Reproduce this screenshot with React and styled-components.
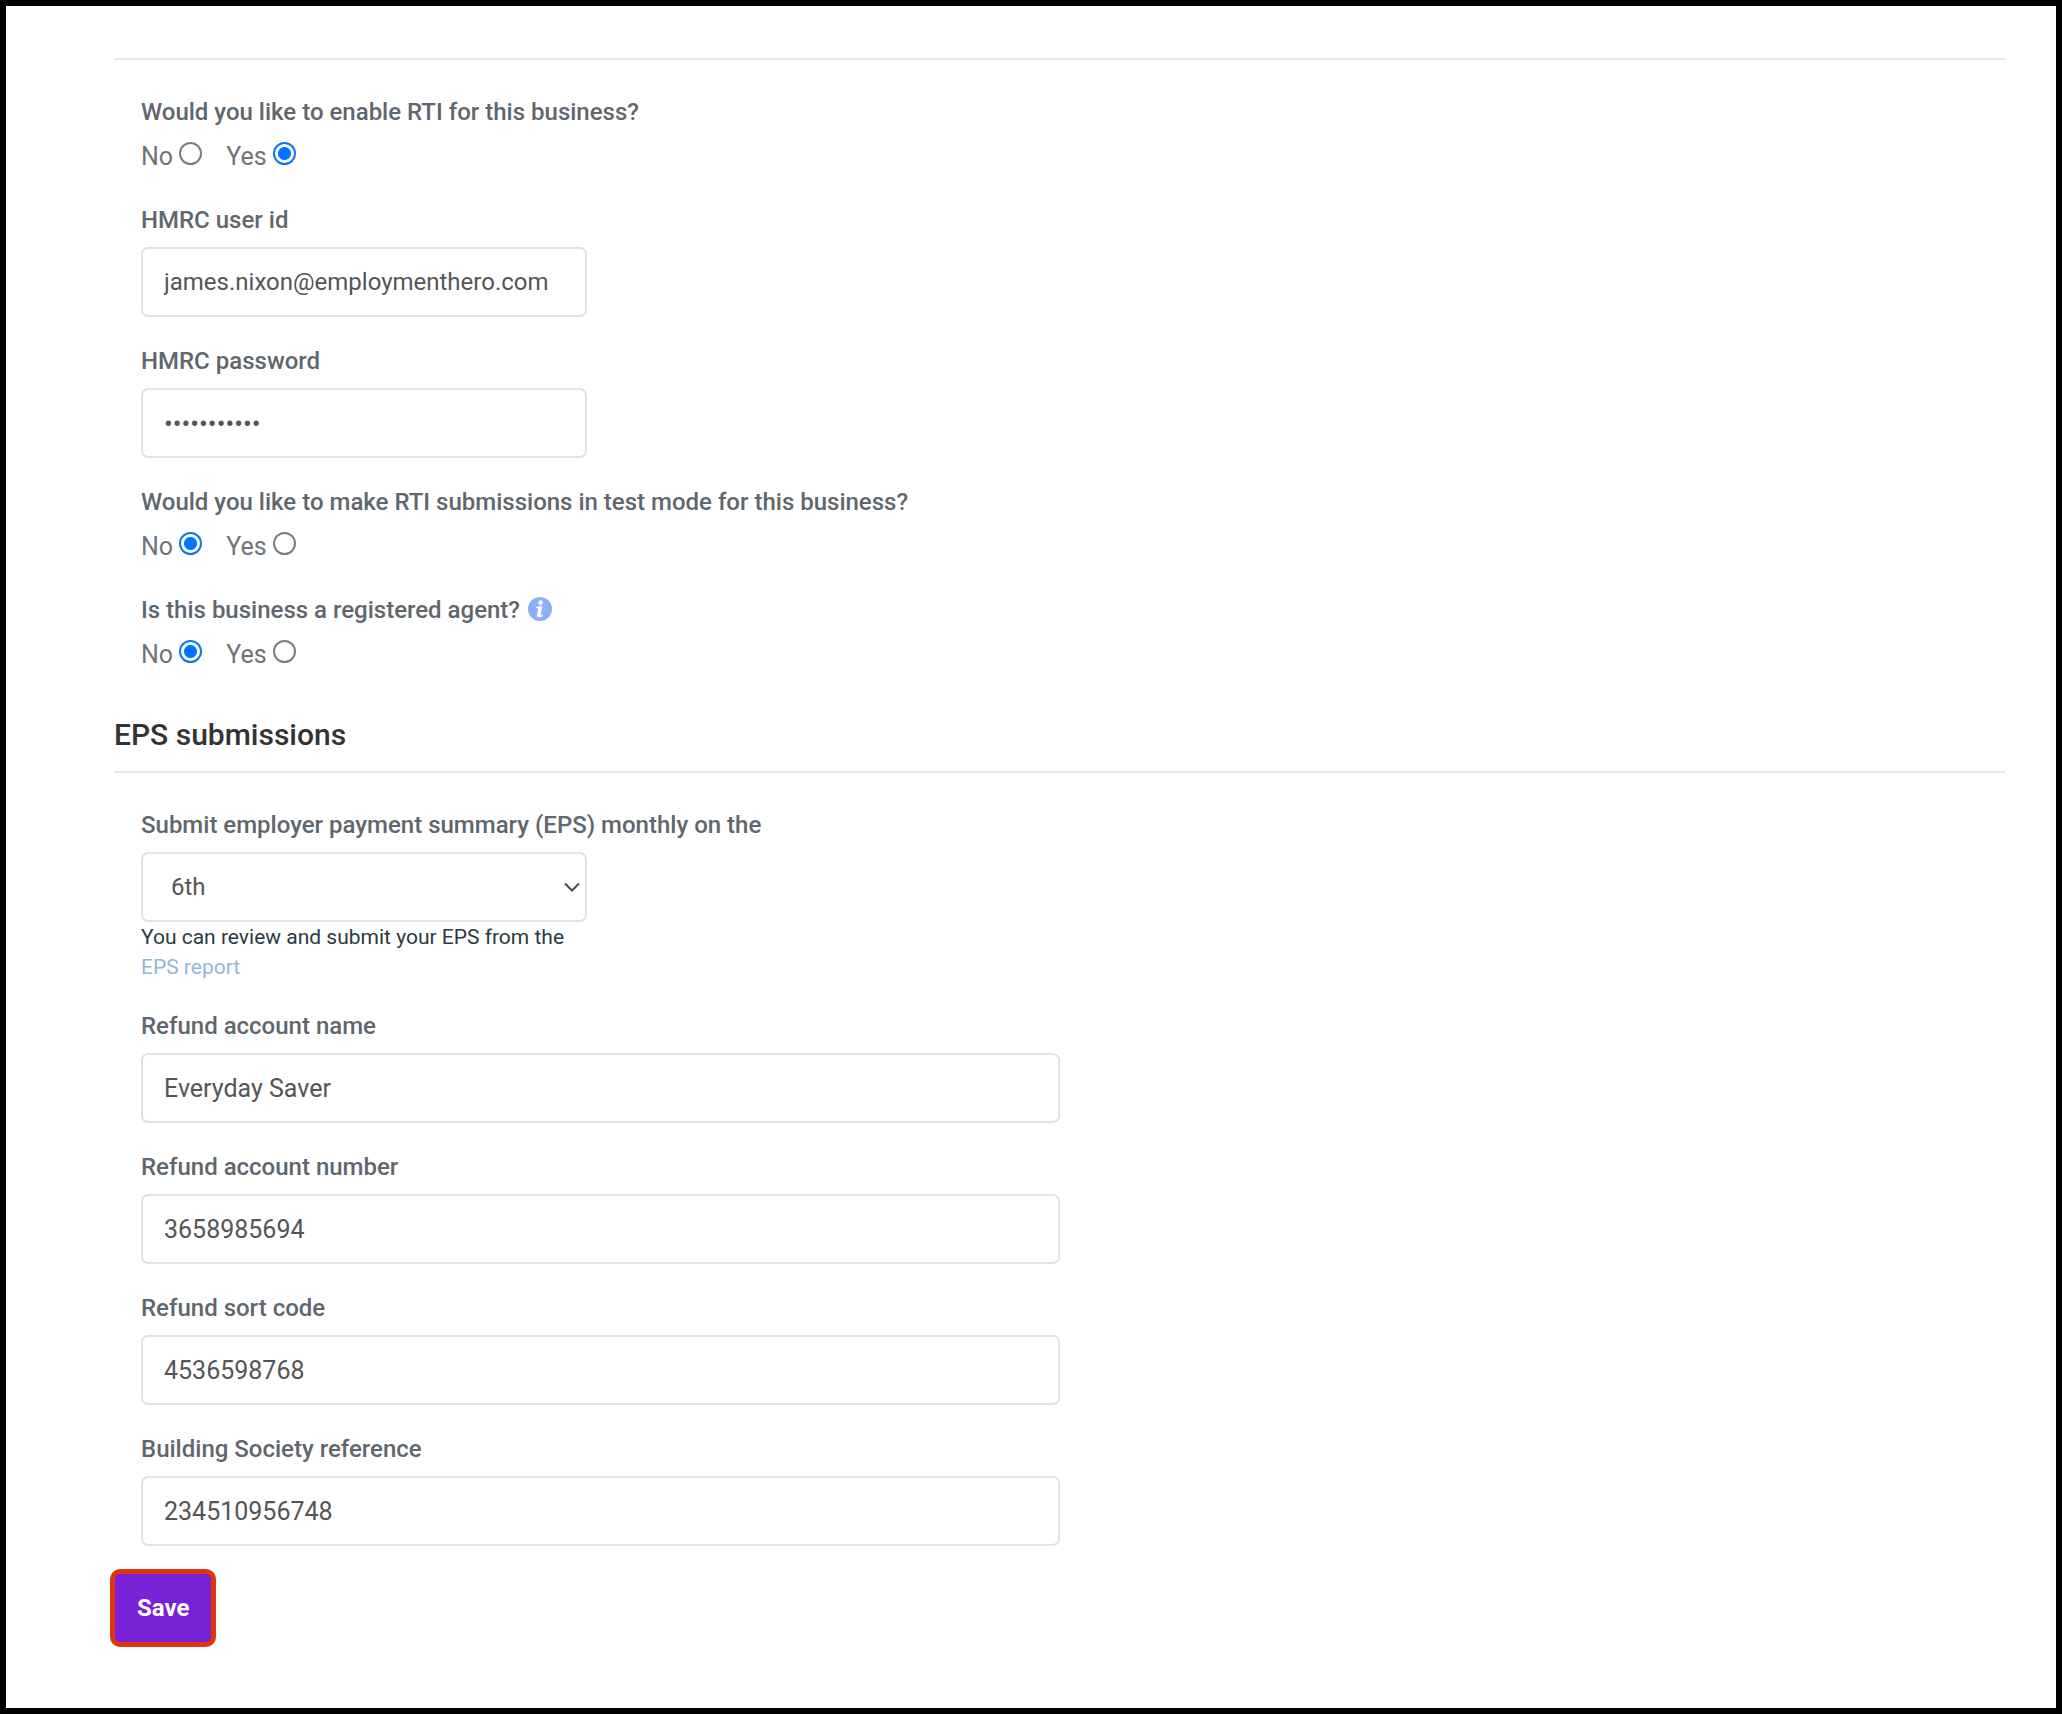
import React, { useState } from "react";
import styled, { createGlobalStyle } from "styled-components";

const days = ["1st", "2nd", "3rd", "4th", "5th", "6th", "7th", "8th"];

const YesNo = ({ name, legend, info, initial }) => {
  const [value, setValue] = useState(initial);

  return (
    <Group>
      <Legend>
        {legend}
        {info && <InfoIcon />}
      </Legend>
      <Options>
        {["No", "Yes"].map((option) => (
          <Option key={option}>
            {option}{" "}
            <Radio
              name={name}
              value={option}
              checked={value === option}
              onChange={() => setValue(option)}
            />
          </Option>
        ))}
      </Options>
    </Group>
  );
};

const TextField = ({ id, label, type = "text", value, wide }) => (
  <Field $wide={wide}>
    <Label htmlFor={id}>{label}</Label>
    <Input
      id={id}
      type={type}
      defaultValue={value}
      autoComplete="off"
      $wide={wide}
    />
  </Field>
);

const InfoIcon = () => (
  <Info viewBox="0 0 24 24" role="img" aria-label="More information">
    <circle cx="12" cy="12" r="12" fill="#8aafff" />
    <circle cx="12.6" cy="5.6" r="2.3" fill="#fff" />
    <path
      d="M8.2 9.9 C10 9.2 12 9 14.3 9.2 L12.7 17.4 C12.6 18.1 13.1 18.2 15 17.8 L14.7 19.3 C13.2 20.1 11.8 20.4 10.7 20.3 C9.2 20.1 8.8 19.1 9.1 17.6 L10.4 11.3 L8 11.3 Z"
      fill="#fff"
    />
  </Info>
);

const App = () => {
  return (
    <>
      <GlobalStyle />
      <Page>
        <Form onSubmit={(e) => e.preventDefault()}>
          <Section>
            <YesNo
              name="rti"
              legend="Would you like to enable RTI for this business?"
              initial="Yes"
            />
            <TextField
              id="hmrc-user"
              label="HMRC user id"
              value="james.nixon@employmenthero.com"
            />
            <TextField
              id="hmrc-password"
              label="HMRC password"
              type="password"
              value="payroll2024"
            />
            <YesNo
              name="test-mode"
              legend="Would you like to make RTI submissions in test mode for this business?"
              initial="No"
            />
            <YesNo
              name="agent"
              legend="Is this business a registered agent?"
              initial="No"
              info
            />
          </Section>

          <Title>EPS submissions</Title>
          <Section>
            <Field>
              <Label htmlFor="eps-day">
                Submit employer payment summary (EPS) monthly on the
              </Label>
              <SelectWrap>
                <Select id="eps-day" defaultValue="6th">
                  {days.map((day) => (
                    <option key={day}>{day}</option>
                  ))}
                </Select>
                <Chevron viewBox="0 0 16 10" aria-hidden="true">
                  <path d="M1 1.5 L8 8.5 L15 1.5" />
                </Chevron>
              </SelectWrap>
              <Help>
                You can review and submit your EPS from the{" "}
                <a href="#eps-report">EPS report</a>
              </Help>
            </Field>
            <TextField
              id="refund-name"
              label="Refund account name"
              value="Everyday Saver"
              wide
            />
            <TextField
              id="refund-number"
              label="Refund account number"
              value="3658985694"
              wide
            />
            <TextField
              id="refund-sort"
              label="Refund sort code"
              value="4536598768"
              wide
            />
            <TextField
              id="society-ref"
              label="Building Society reference"
              value="234510956748"
              wide
            />
          </Section>
          <SaveButton type="submit">Save</SaveButton>
        </Form>
      </Page>
    </>
  );
};

const GlobalStyle = createGlobalStyle`
  * {
    box-sizing: border-box;
  }
  body {
    margin: 0;
    background: #fff;
    font-family: Roboto, "Liberation Sans", sans-serif;
    font-size: 24px;
    line-height: 34px;
  }
`;

const Page = styled.main`
  min-height: 100vh;
  border: 6px solid #000;
  padding: 52px 51px 60px 108px;
`;

const Form = styled.form`
  display: flex;
  flex-direction: column;
  align-items: stretch;
`;

const Section = styled.div`
  display: flex;
  flex-direction: column;
  gap: 27px;
  border-top: 2px solid #e7e8e8;
  padding: 35px 0 0 27px;
`;

const Group = styled.fieldset`
  border: none;
  margin: 0;
  padding: 0;
  min-width: 0;
`;

const Legend = styled.legend`
  display: flex;
  align-items: center;
  gap: 8px;
  padding: 0;
  color: #5f676d;
  font-weight: 500;
`;

const Options = styled.div`
  display: flex;
  gap: 24px;
  padding: 11px 0 2px;
`;

const Option = styled.label`
  color: #6f7478;
  font-size: 25px;
`;

const Radio = styled.input.attrs({ type: "radio" })`
  appearance: none;
  width: 23px;
  height: 23px;
  margin: 0;
  border: 2px solid #7d7d7d;
  border-radius: 50%;

  &:checked {
    border-color: #0a75f5;
    background: radial-gradient(circle, #0075ff 6px, #fff 7px);
  }
`;

const Info = styled.svg`
  width: 24px;
  height: 24px;
  margin-bottom: 3px;
`;

const Field = styled.div`
  display: flex;
  flex-direction: column;
  width: 100%;
  max-width: ${(p) => (p.$wide ? "919px" : "446px")};
`;

const Label = styled.label`
  margin-bottom: 10px;
  color: #5f676d;
  font-weight: 500;
  white-space: nowrap;
`;

const Input = styled.input`
  width: 100%;
  height: 70px;
  border: 2px solid #dfe3e4;
  border-radius: 7px;
  padding: 0 21px;
  background: #fff;
  color: #555;
  font: inherit;
  font-size: ${(p) => (p.$wide ? "25px" : "24px")};

  &[type="password"] {
    padding-top: 2px;
    font-size: 26px;
  }
`;

const SelectWrap = styled.div`
  position: relative;
`;

const Select = styled(Input).attrs({ as: "select" })`
  display: block;
  appearance: none;
  padding: 0 40px 0 28px;
`;

const Chevron = styled.svg`
  position: absolute;
  top: 30px;
  right: 7px;
  width: 16px;
  height: 10px;
  fill: none;
  stroke: #4a4a4a;
  stroke-width: 2;
  pointer-events: none;
`;

const Help = styled.p`
  margin: 0;
  color: #2b3a42;
  font-size: 21px;
  line-height: 30px;

  a {
    color: #94b5dc;
    text-decoration: none;
  }
`;

const Title = styled.h2`
  margin: 39px 0 14px;
  color: #333;
  font-size: 30px;
  font-weight: 500;
  line-height: 44px;
`;

const SaveButton = styled.button`
  align-self: flex-start;
  height: 78px;
  margin: 23px 0 0 -4px;
  border: 5px solid #e0350b;
  border-radius: 10px;
  padding: 0 22px;
  background: #7722d6;
  color: #fff;
  font-family: inherit;
  font-size: 24px;
  font-weight: 700;
`;

export default App;
